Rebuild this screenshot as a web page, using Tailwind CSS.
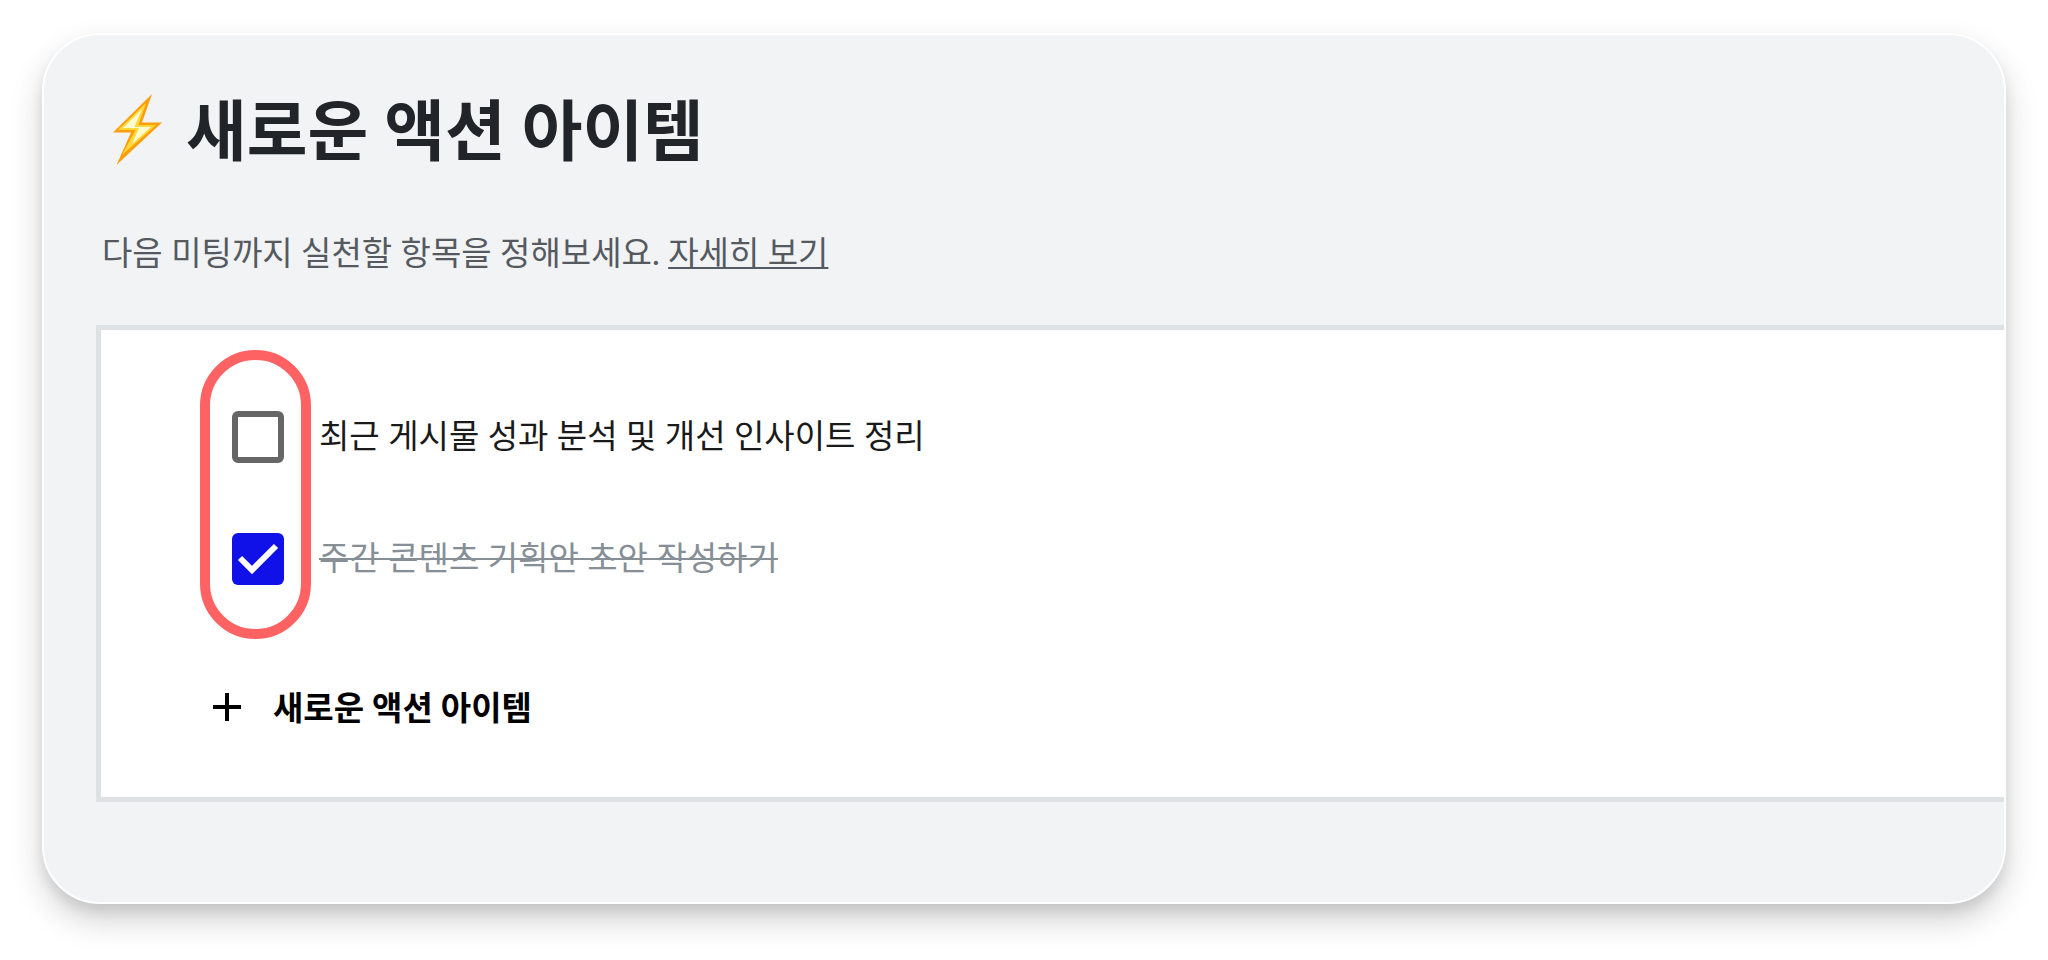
<!DOCTYPE html>
<html lang="ko">
<head>
<meta charset="utf-8">
<meta name="viewport" content="width=device-width, initial-scale=1">
<title>새로운 액션 아이템</title>
<script src="https://cdn.jsdelivr.net/npm/@tailwindcss/browser@4"></script>
</head>
<body class="bg-white px-[42px] pt-[33px] pb-14 font-[Lato,'Noto_Sans_CJK_KR',sans-serif] text-[33px] leading-[52px]">
  <main class="overflow-hidden rounded-[58px] border-2 border-white bg-[#f1f3f5] pt-[47px] pb-[100px] pl-[52px] shadow-[0_16px_32px_rgba(0,0,0,0.18),0_8px_12px_rgba(0,0,0,0.08)]">
    <header class="pl-[6px]">
      <h1 class="flex items-center gap-6 pl-[10px] text-[66px] leading-[96px] font-bold text-[#212529]">
        <svg class="h-[72px] w-[50px] shrink-0" viewBox="0 0 50 72" aria-hidden="true">
          <path d="M40 0 1 38.500h18L4.500 71 50 28.500H30L40 0Z" fill="#ff9d0a"/>
          <path d="M34 9 6 36h17.500L10 61 44 31H26.500L34 9Z" fill="#ffd83a"/>
          <path d="M30 15 11 34h16l-7 16 19-17H22.500Z" fill="#fffbd0"/>
        </svg>
        새로운 액션 아이템
      </h1>
      <p class="mt-12 text-[#555a60]">다음 미팅까지 실천할 항목을 정해보세요. <a href="#" class="underline decoration-2 underline-offset-2">자세히 보기</a></p>
    </header>

    <section class="mt-[47px] border-y-[5px] border-l-[5px] border-[#dee2e4] bg-white pt-[81px] pb-[64px] pl-[107px]">
      <div class="relative pl-6">
        <div class="pointer-events-none absolute -top-[61px] -bottom-[54px] -left-2 w-[111px] rounded-full border-[10px] border-[#ff6262]"></div>
        <ul class="flex flex-col gap-[70px]">
          <li>
            <label class="flex items-start gap-[35px] leading-[48px] text-[#1a1a1a]">
              <input type="checkbox" class="size-[52px] shrink-0 appearance-none rounded-md border-[6px] border-[#666666]">
              <span>최근 게시물 성과 분석 및 개선 인사이트 정리</span>
            </label>
          </li>
          <li>
            <label class="flex items-start gap-[35px] leading-[48px] text-[#868e96]">
              <span class="grid shrink-0">
                <input type="checkbox" checked class="col-start-1 row-start-1 size-[52px] appearance-none rounded-md bg-[#1010e8]">
                <svg class="pointer-events-none col-start-1 row-start-1 size-[52px]" viewBox="0 0 52 52" fill="none" stroke="#fff" stroke-width="6" aria-hidden="true"><path d="M8 25 20 37 44 13"/></svg>
              </span>
              <span class="line-through decoration-2">주간 콘텐츠 기획안 초안 작성하기</span>
            </label>
          </li>
        </ul>
      </div>
      <button type="button" class="mt-24 flex items-center gap-[30px] pl-[3px] font-bold text-black">
        <svg class="size-8" viewBox="0 0 32 32" fill="none" stroke="#000" stroke-width="4" aria-hidden="true"><path d="M16 2v28M2 16h28"/></svg>
        <span>새로운 액션 아이템</span>
      </button>
    </section>
  </main>
</body>
</html>
